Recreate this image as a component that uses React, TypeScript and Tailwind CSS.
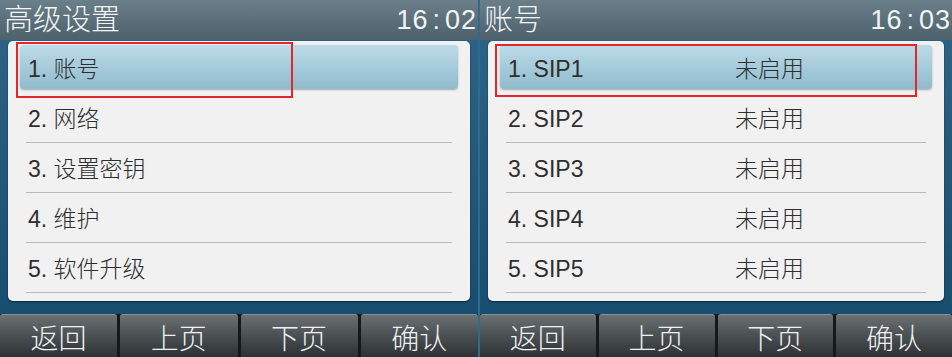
import React from 'react'

const FONT = '"Liberation Sans", "Noto Sans CJK SC", sans-serif'

interface Row {
  label: string
  value?: string
}

interface ScreenProps {
  title: string
  time: string
  rows: Row[]
  width: string
  redBox: string
  valueCol?: string
}

function Screen({ title, time, rows, width, redBox, valueCol }: ScreenProps) {
  return (
    <div className={`relative flex flex-col h-[357px] ${width} bg-[#1d5678]`}>
      {/* Header */}
      <div className="h-[40px] flex items-center justify-between pl-[4px] pr-[1px] pt-[2px] bg-gradient-to-b from-[#6a7f89] to-[#4c616b]">
        <span className="text-[29px] leading-none font-light text-[#f2f4f5]">{title}</span>
        <span className="text-[27px] leading-none font-light text-[#f2f4f5] tracking-[1px]">
          {time.slice(0, 2)}
          <span className="mx-[4px]">:</span>
          {time.slice(3)}
        </span>
      </div>

      {/* List panel */}
      <div className="flex-1 px-[8px] pt-[1px] pb-[13px] bg-gradient-to-b from-[#2c6384] to-[#174e70]">
        <div className="h-full rounded-[5px] bg-[#f1f1f1] pt-[2px] pb-[8px] shadow-[0_1px_2px_rgba(0,0,0,0.5)]">
          {rows.map((row, i) => (
            <div key={i} className="relative h-[50px]">
              {i === 0 && (
                <div className="absolute left-[12px] right-[12px] top-[2px] bottom-[4px] rounded-[4px] bg-gradient-to-b from-[#bddbe8] to-[#8fbbcc] shadow-[0_1px_2px_rgba(0,0,0,0.3)]" />
              )}
              <div className="relative h-full flex items-center pl-[20px] pt-[4px] text-[23px] font-light text-[#2e2e2e]">
                <span>{row.label}</span>
                {row.value && <span className={`absolute ${valueCol}`}>{row.value}</span>}
              </div>
              {i > 0 && <div className="absolute left-[18px] right-[18px] bottom-0 h-[1px] bg-[#b9b9b9]" />}
            </div>
          ))}
        </div>
      </div>

      {/* Soft keys */}
      <div className="h-[44px] flex gap-[3px] bg-[#15191c]">
        {['返回', '上页', '下页', '确认'].map((k) => (
          <div
            key={k}
            className="flex-1 flex items-center justify-center rounded-t-[3px] border-t border-[#8a9094] bg-gradient-to-b from-[#6b7073] via-[#4a4f52] to-[#2d3235] text-[28px] leading-none font-light text-[#eef0f1] pt-[8px]"
          >
            {k}
          </div>
        ))}
      </div>

      {/* Red selection marker */}
      <div className={`absolute border-2 border-[#e3262b] ${redBox}`} />
    </div>
  )
}

export default function App() {
  return (
    <div className="flex w-[952px] h-[357px] overflow-hidden bg-[#0f3d5a]" style={{ fontFamily: FONT }}>
      <Screen
        title="高级设置"
        time="16:02"
        width="w-[478px]"
        redBox="left-[16px] top-[42px] w-[277px] h-[56px]"
        rows={[
          { label: '1. 账号' },
          { label: '2. 网络' },
          { label: '3. 设置密钥' },
          { label: '4. 维护' },
          { label: '5. 软件升级' },
        ]}
      />
      <div className="w-[2px] h-full bg-[#2f6b8c]" />
      <Screen
        title="账号"
        time="16:03"
        width="w-[472px]"
        redBox="left-[15px] top-[44px] w-[422px] h-[53px]"
        valueCol="left-[247px]"
        rows={[1, 2, 3, 4, 5].map((n) => ({ label: `${n}. SIP${n}`, value: '未启用' }))}
      />
    </div>
  )
}
